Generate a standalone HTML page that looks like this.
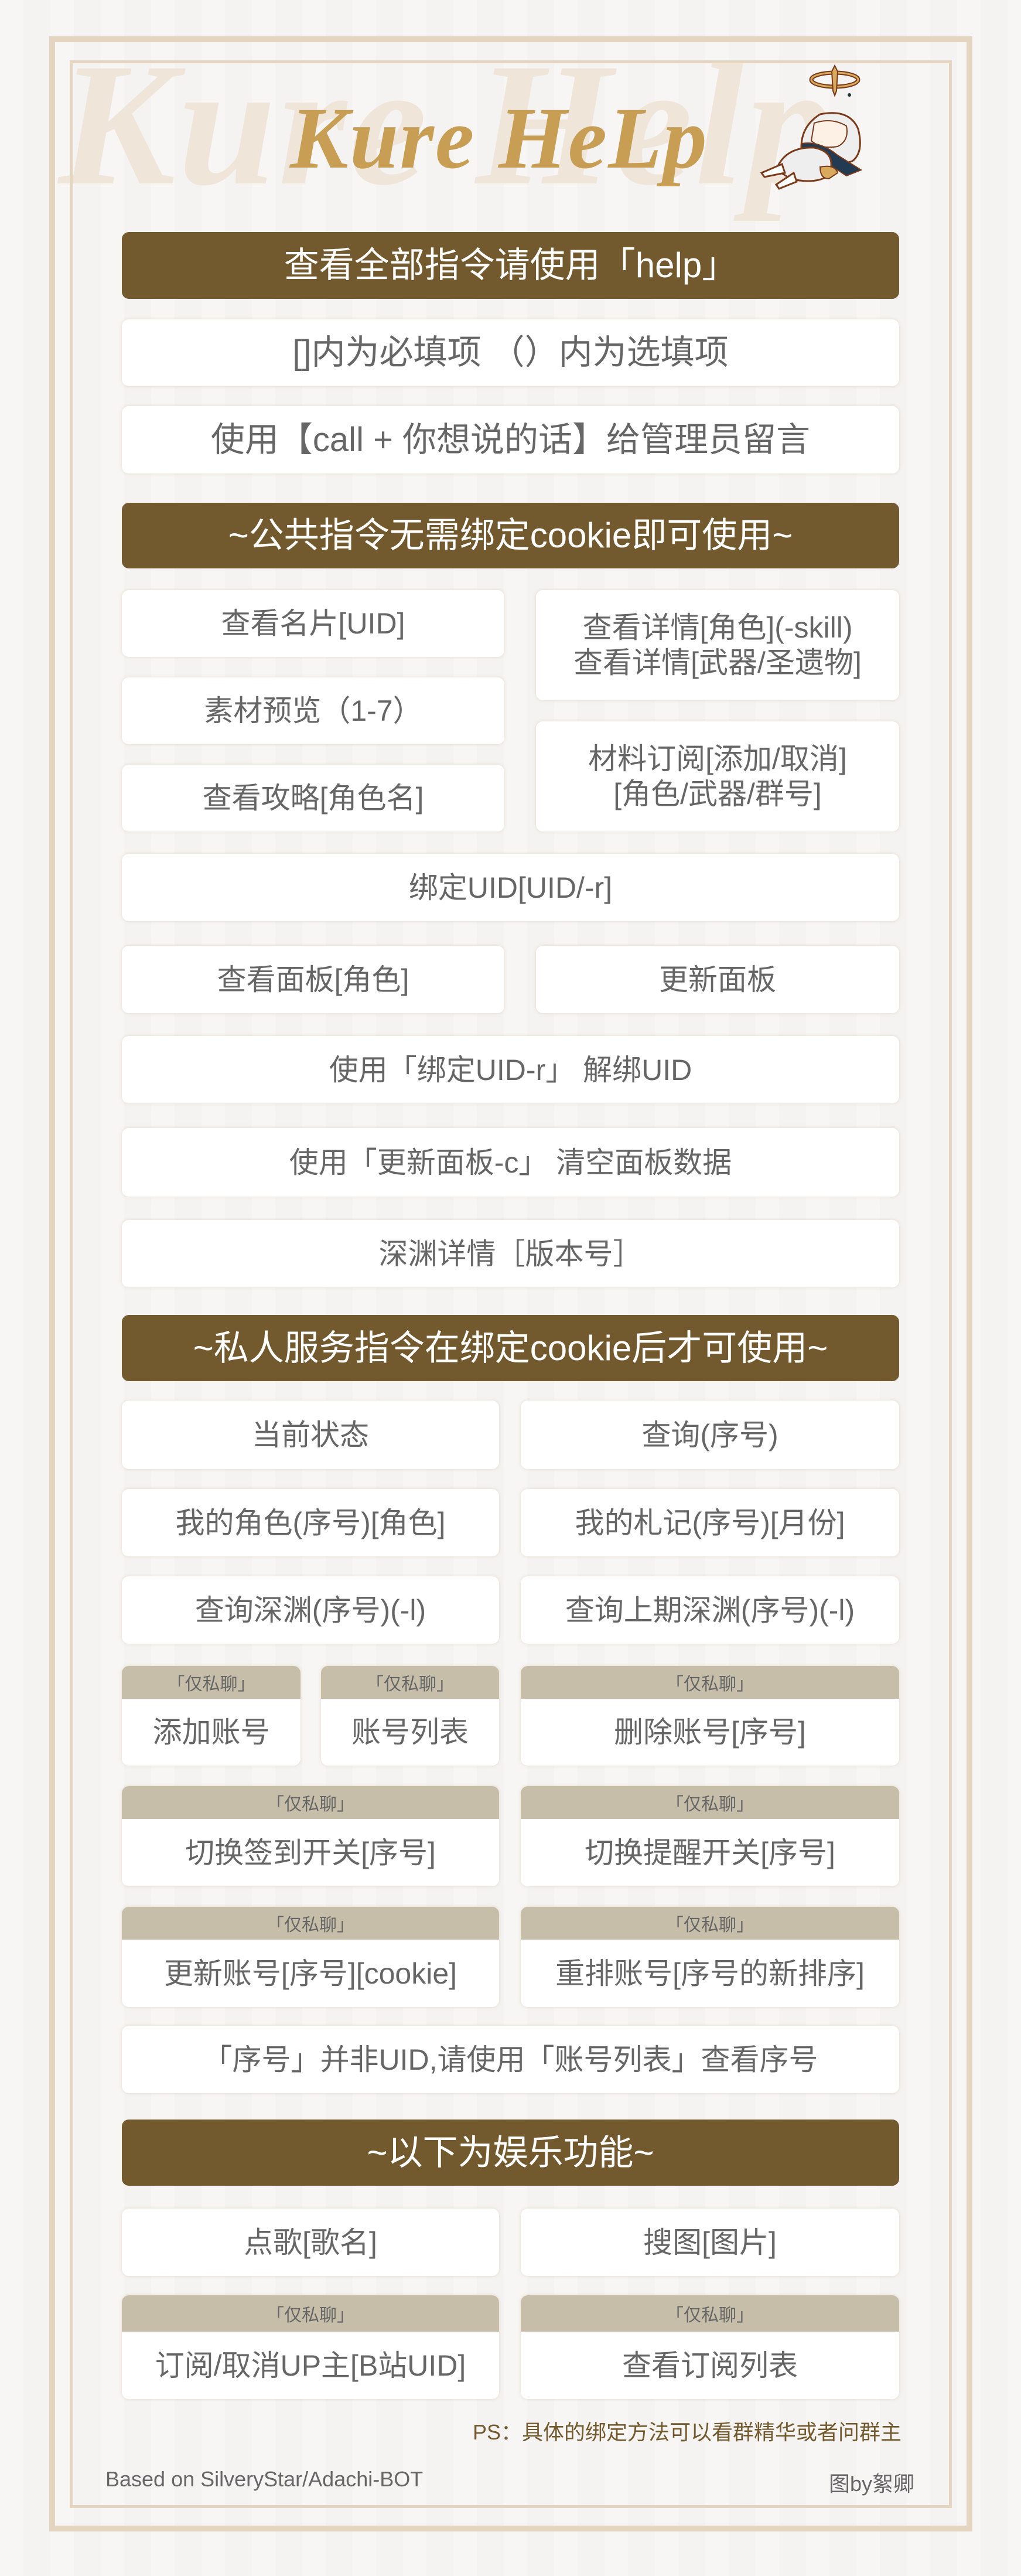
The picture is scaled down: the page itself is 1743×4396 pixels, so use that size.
<!DOCTYPE html>
<html><head><meta charset="utf-8">
<style>
*{margin:0;padding:0;box-sizing:border-box}
html,body{width:1743px;height:4396px;overflow:hidden}
body{background:#f7f6f4;position:relative;font-family:"Liberation Sans","Noto Sans CJK SC",sans-serif;
background-image:repeating-linear-gradient(90deg,rgba(0,0,0,0) 0 40px,rgba(0,0,0,0.012) 40px 86px);}
.f1{position:absolute;left:84px;top:62px;width:1576px;height:4258px;border:10px solid #e3d5c0}
.f2{position:absolute;left:119px;top:103px;width:1506px;height:4177px;border:5px solid #e3d5c0}
.wm{position:absolute;left:100px;top:40px;font-family:"Liberation Serif",serif;font-style:italic;font-weight:bold;font-size:300px;color:#efe6d9;letter-spacing:4px;white-space:nowrap}
.title{position:absolute;left:495px;top:150px;font-family:"Liberation Serif",serif;font-style:italic;font-weight:bold;font-size:150px;color:#c79e53;white-space:nowrap;letter-spacing:2px}
.b{position:absolute;background:#fff;border-radius:12px;box-shadow:0 0 6px rgba(200,170,130,.35);display:flex;align-items:center;justify-content:center;text-align:center;color:#666;font-size:50px;line-height:60px}
.d{background:#735a2e;color:#fff;font-size:60px;box-shadow:none}
.L{font-size:58px}
.t{position:absolute;background:#c7bea9;border-radius:12px 12px 0 0;color:#666;font-size:30px;display:flex;align-items:center;justify-content:center}
</style></head><body>
<div class="wm">Kure Help</div>
<div class="f1"></div><div class="f2"></div>
<div class="title">Kure HeLp</div>
<svg style="position:absolute;left:1250px;top:100px" width="300" height="250" viewBox="0 0 300 250">
<ellipse cx="175" cy="36" rx="40" ry="12" fill="none" stroke="#7a3a1a" stroke-width="7"/>
<ellipse cx="175" cy="36" rx="40" ry="12" fill="none" stroke="#d8aa5e" stroke-width="3"/>
<path d="M170 22 L175 12 L180 22 L178 55 L175 63 L172 55Z" fill="#d8aa5e" stroke="#7a3a1a" stroke-width="2"/>
<circle cx="200" cy="62" r="3" fill="#233"/>
<path d="M120 170 Q110 120 150 95 Q200 85 215 120 Q225 160 205 175 Q160 190 120 170Z" fill="#eeeeee" stroke="#7a3a1a" stroke-width="3"/>
<path d="M140 110 Q170 100 195 115 Q200 140 180 150 Q150 155 135 140Z" fill="#fdf1e6" stroke="#7a3a1a" stroke-width="2"/>
<path d="M118 145 Q150 140 180 165 L220 190 L195 200 Q160 175 120 165Z" fill="#233b52" stroke="#7a3a1a" stroke-width="2"/>
<path d="M75 190 Q90 150 140 152 Q180 160 165 200 Q140 215 100 205Z" fill="#eeeeee" stroke="#7a3a1a" stroke-width="3"/>
<path d="M50 195 L85 180 L90 195 L55 202Z M75 215 L105 195 L110 210 L80 222Z" fill="#fff" stroke="#7a3a1a" stroke-width="3"/>
<path d="M150 185 Q175 180 180 195 L165 205 Q150 205 150 185Z" fill="#d8aa5e" stroke="#7a3a1a" stroke-width="2"/>
</svg>

<div class="b d" style="left:208px;top:396px;width:1327px;height:114px">查看全部指令请使用「help」</div>
<div class="b L" style="left:208px;top:545px;width:1327px;height:114px">[]内为必填项 （）内为选填项</div>
<div class="b L" style="left:208px;top:693px;width:1327px;height:115px">使用【call + 你想说的话】给管理员留言</div>
<div class="b d" style="left:208px;top:858px;width:1327px;height:112px">~公共指令无需绑定cookie即可使用~</div>

<div class="b" style="left:208px;top:1007px;width:653px;height:114px">查看名片[UID]</div>
<div class="b" style="left:915px;top:1007px;width:620px;height:188px">查看详情[角色](-skill)<br>查看详情[武器/圣遗物]</div>
<div class="b" style="left:208px;top:1156px;width:653px;height:114px">素材预览（1-7）</div>
<div class="b" style="left:208px;top:1305px;width:653px;height:114px">查看攻略[角色名]</div>
<div class="b" style="left:915px;top:1231px;width:620px;height:188px">材料订阅[添加/取消]<br>[角色/武器/群号]</div>
<div class="b" style="left:208px;top:1457px;width:1327px;height:115px">绑定UID[UID/-r]</div>
<div class="b" style="left:208px;top:1614px;width:653px;height:115px">查看面板[角色]</div>
<div class="b" style="left:915px;top:1614px;width:620px;height:115px">更新面板</div>
<div class="b" style="left:208px;top:1768px;width:1327px;height:115px">使用「绑定UID-r」 解绑UID</div>
<div class="b" style="left:208px;top:1925px;width:1327px;height:117px">使用「更新面板-c」 清空面板数据</div>
<div class="b" style="left:208px;top:2082px;width:1327px;height:115px">深渊详情［版本号］</div>
<div class="b d" style="left:208px;top:2244px;width:1327px;height:113px">~私人服务指令在绑定cookie后才可使用~</div>

<div class="b" style="left:208px;top:2390px;width:644px;height:117px">当前状态</div>
<div class="b" style="left:889px;top:2390px;width:646px;height:117px">查询(序号)</div>
<div class="b" style="left:208px;top:2541px;width:644px;height:115px">我的角色(序号)[角色]</div>
<div class="b" style="left:889px;top:2541px;width:646px;height:115px">我的札记(序号)[月份]</div>
<div class="b" style="left:208px;top:2690px;width:644px;height:115px">查询深渊(序号)(-l)</div>
<div class="b" style="left:889px;top:2690px;width:646px;height:115px">查询上期深渊(序号)(-l)</div>

<div class="b" style="left:208px;top:2843px;width:305px;height:170px;padding-top:56px">添加账号</div>
<div class="t" style="left:208px;top:2843px;width:305px;height:56px">「仅私聊」</div>
<div class="b" style="left:548px;top:2843px;width:304px;height:170px;padding-top:56px">账号列表</div>
<div class="t" style="left:548px;top:2843px;width:304px;height:56px">「仅私聊」</div>
<div class="b" style="left:889px;top:2843px;width:646px;height:170px;padding-top:56px">删除账号[序号]</div>
<div class="t" style="left:889px;top:2843px;width:646px;height:56px">「仅私聊」</div>

<div class="b" style="left:208px;top:3048px;width:644px;height:171px;padding-top:56px">切换签到开关[序号]</div>
<div class="t" style="left:208px;top:3048px;width:644px;height:56px">「仅私聊」</div>
<div class="b" style="left:889px;top:3048px;width:646px;height:171px;padding-top:56px">切换提醒开关[序号]</div>
<div class="t" style="left:889px;top:3048px;width:646px;height:56px">「仅私聊」</div>

<div class="b" style="left:208px;top:3254px;width:644px;height:171px;padding-top:56px">更新账号[序号][cookie]</div>
<div class="t" style="left:208px;top:3254px;width:644px;height:56px">「仅私聊」</div>
<div class="b" style="left:889px;top:3254px;width:646px;height:171px;padding-top:56px">重排账号[序号的新排序]</div>
<div class="t" style="left:889px;top:3254px;width:646px;height:56px">「仅私聊」</div>

<div class="b" style="left:208px;top:3457px;width:1327px;height:115px">「序号」并非UID,请使用「账号列表」查看序号</div>
<div class="b d" style="left:208px;top:3617px;width:1327px;height:113px">~以下为娱乐功能~</div>
<div class="b" style="left:208px;top:3769px;width:644px;height:115px">点歌[歌名]</div>
<div class="b" style="left:889px;top:3769px;width:646px;height:115px">搜图[图片]</div>
<div class="b" style="left:208px;top:3917px;width:644px;height:177px;padding-top:62px">订阅/取消UP主[B站UID]</div>
<div class="t" style="left:208px;top:3917px;width:644px;height:62px">「仅私聊」</div>
<div class="b" style="left:889px;top:3917px;width:646px;height:177px;padding-top:62px">查看订阅列表</div>
<div class="t" style="left:889px;top:3917px;width:646px;height:62px">「仅私聊」</div>

<div style="position:absolute;right:204px;top:4122px;font-size:36px;color:#735a2e;white-space:nowrap">PS：具体的绑定方法可以看群精华或者问群主</div>
<div style="position:absolute;left:180px;top:4210px;font-size:36px;color:#666;white-space:nowrap">Based on SilveryStar/Adachi-BOT</div>
<div style="position:absolute;right:182px;top:4210px;font-size:36px;color:#666;white-space:nowrap">图by絮卿</div>
</body></html>
